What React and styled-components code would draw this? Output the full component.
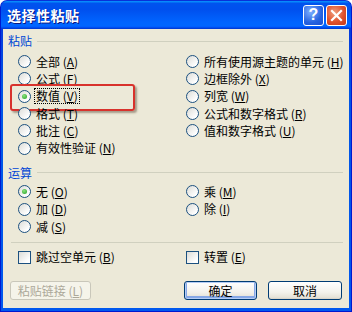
import styled, { createGlobalStyle } from 'styled-components';

const GlobalStyle = createGlobalStyle`
  html, body {
    margin: 0;
    padding: 0;
    background: #ffffff;
  }
  body {
    font-family: "Noto Sans CJK SC", "DejaVu Sans", sans-serif;
    font-size: 12px;
  }
`;

const pasteLeft = [
  { text: '全部', key: 'A' },
  { text: '公式', key: 'F' },
  { text: '数值', key: 'V', checked: true, focus: true, marked: true },
  { text: '格式', key: 'T' },
  { text: '批注', key: 'C' },
  { text: '有效性验证', key: 'N' },
];

const pasteRight = [
  { text: '所有使用源主题的单元', key: 'H' },
  { text: '边框除外', key: 'X' },
  { text: '列宽', key: 'W' },
  { text: '公式和数字格式', key: 'R' },
  { text: '值和数字格式', key: 'U' },
];

const opLeft = [
  { text: '无', key: 'O', checked: true },
  { text: '加', key: 'D' },
  { text: '减', key: 'S' },
];

const opRight = [
  { text: '乘', key: 'M' },
  { text: '除', key: 'I' },
];

function Option({ item, rowHeight }) {
  return (
    <Item $h={rowHeight}>
      {item.marked && <Highlight />}
      <Radio $checked={item.checked} />
      <Label $focus={item.focus}>
        {item.text} (<u>{item.key}</u>)
      </Label>
    </Item>
  );
}

function App() {
  return (
    <>
      <GlobalStyle />
      <Window>
        <TitleBar>
          <Title>选择性粘贴</Title>
          <Controls>
            <HelpButton>?</HelpButton>
            <CloseButton>
              <svg width="13" height="13" viewBox="0 0 13 13">
                <path d="M2 2 L11 11 M11 2 L2 11" stroke="#fff" strokeWidth="2.2" strokeLinecap="square" />
              </svg>
            </CloseButton>
          </Controls>
        </TitleBar>
        <Body>
          <GroupHeader>
            <span>粘贴</span>
          </GroupHeader>
          <Columns $top={5}>
            <Column>
              {pasteLeft.map((it) => (
                <Option key={it.key} item={it} rowHeight={17.3} />
              ))}
            </Column>
            <Column>
              {pasteRight.map((it) => (
                <Option key={it.key} item={it} rowHeight={17.3} />
              ))}
            </Column>
          </Columns>

          <GroupHeader $top={9}>
            <span>运算</span>
          </GroupHeader>
          <Columns $top={3}>
            <Column>
              {opLeft.map((it) => (
                <Option key={it.key} item={it} rowHeight={17.5} />
              ))}
            </Column>
            <Column>
              {opRight.map((it) => (
                <Option key={it.key} item={it} rowHeight={17.5} />
              ))}
            </Column>
          </Columns>

          <Separator />

          <Columns $top={6}>
            <Item $h={16}>
              <Check />
              <Label>
                跳过空单元 (<u>B</u>)
              </Label>
            </Item>
            <Item $h={16}>
              <Check />
              <Label>
                转置 (<u>E</u>)
              </Label>
            </Item>
          </Columns>

          <ButtonRow>
            <Button $w={81} disabled>
              粘贴链接 (<u>L</u>)
            </Button>
            <ButtonGroup>
              <Button $w={73} $default>
                确定
              </Button>
              <Button $w={74}>取消</Button>
            </ButtonGroup>
          </ButtonRow>
        </Body>
      </Window>
    </>
  );
}

export default App;

const Window = styled.div`
  width: 352px;
  height: 312px;
  box-sizing: border-box;
  display: flex;
  flex-direction: column;
  border-radius: 7px 7px 0 0;
  background: linear-gradient(#0831d9, #0055e5 30%, #0058ee);
  border: 1px solid #0019cf;
  border-top-color: #0831d9;
  overflow: hidden;
`;

const TitleBar = styled.div`
  height: 28px;
  flex-shrink: 0;
  display: flex;
  align-items: center;
  justify-content: space-between;
  padding: 0 4px 0 6px;
  background: linear-gradient(
    #0997ff 0%,
    #0053ee 9%,
    #0050ee 30%,
    #0064ff 75%,
    #0066ff 88%,
    #005bff 93%,
    #003dd7 97%,
    #003dd7 100%
  );
`;

const Title = styled.div`
  color: #ffffff;
  font-weight: 700;
  font-size: 14px;
  letter-spacing: 0.5px;
  text-shadow: 1px 1px 0 #0a1883;
`;

const Controls = styled.div`
  display: flex;
  gap: 2px;
`;

const CtrlBase = styled.div`
  width: 21px;
  height: 21px;
  box-sizing: border-box;
  border: 1px solid #ffffff;
  border-radius: 3px;
  display: flex;
  align-items: center;
  justify-content: center;
  color: #ffffff;
`;

const HelpButton = styled(CtrlBase)`
  font-family: "Liberation Sans", Arial, sans-serif;
  font-weight: 700;
  font-size: 16px;
  background: radial-gradient(circle at 35% 30%, #7fb0ff, #2663e0 60%, #1c4fd0);
`;

const CloseButton = styled(CtrlBase)`
  background: radial-gradient(circle at 40% 35%, #f0a080, #e0512c 55%, #c2391b);
`;

const Body = styled.div`
  flex: 1;
  margin: 0 2px 3px 2px;
  background: #ece9d8;
  padding: 5px 6px 0 5px;
  display: flex;
  flex-direction: column;
  color: #000000;
  position: relative;
`;

const GroupHeader = styled.div`
  height: 14px;
  margin-top: ${(p) => p.$top || 0}px;
  display: flex;
  align-items: center;
  gap: 5px;
  color: #0046d5;
  line-height: 14px;
  &::after {
    content: '';
    flex: 1;
    height: 1px;
    background: #d0d0bf;
  }
`;

const Columns = styled.div`
  display: grid;
  grid-template-columns: 168px 1fr;
  padding-left: 10px;
  margin-top: ${(p) => p.$top || 0}px;
`;

const Column = styled.div`
  display: flex;
  flex-direction: column;
`;

const Item = styled.div`
  position: relative;
  height: ${(p) => p.$h}px;
  display: flex;
  align-items: center;
  gap: 3px;
  white-space: nowrap;
  u {
    text-decoration: underline;
  }
`;

const Radio = styled.span`
  width: 13px;
  height: 13px;
  box-sizing: border-box;
  flex-shrink: 0;
  border-radius: 50%;
  border: 1px solid #1c5180;
  background: linear-gradient(135deg, #dcdcd7, #ffffff 80%);
  display: flex;
  align-items: center;
  justify-content: center;
  &::after {
    content: '';
    display: ${(p) => (p.$checked ? 'block' : 'none')};
    width: 5px;
    height: 5px;
    border-radius: 50%;
    background: radial-gradient(circle at 40% 35%, #8be27f, #21a121);
  }
`;

const Check = styled.span`
  width: 13px;
  height: 13px;
  box-sizing: border-box;
  flex-shrink: 0;
  border: 1px solid #1c5180;
  background: linear-gradient(135deg, #dcdcd7, #ffffff 80%);
`;

const Label = styled.span`
  font-size: 12px;
  line-height: 12px;
  padding: 1px 1px;
  border: 1px dotted ${(p) => (p.$focus ? '#000000' : 'transparent')};
`;

const Highlight = styled.span`
  position: absolute;
  left: -8px;
  top: -4px;
  width: 125px;
  height: 27px;
  box-sizing: border-box;
  border: 2px solid #d8322c;
  border-radius: 3px;
  box-shadow: 2px 2px 2px rgba(80, 60, 40, 0.45);
  pointer-events: none;
`;

const Separator = styled.div`
  height: 1px;
  background: #d0d0bf;
  margin: 7px 0 0 3px;
`;

const ButtonRow = styled.div`
  display: flex;
  align-items: center;
  justify-content: space-between;
  margin-top: 16px;
  padding-left: 2px;
  padding-right: 1px;
`;

const ButtonGroup = styled.div`
  display: flex;
  gap: 11px;
`;

const Button = styled.button`
  width: ${(p) => p.$w}px;
  height: 19px;
  padding: 0;
  box-sizing: border-box;
  font-family: "Noto Sans CJK SC", "DejaVu Sans", sans-serif;
  font-size: 12px;
  line-height: 12px;
  color: #000000;
  border: 1px solid #003c74;
  border-radius: 3px;
  background: linear-gradient(#ffffff, #f3f2ec 60%, #e6e3d8 90%, #d6d0c5);
  box-shadow: ${(p) => (p.$default ? 'inset 0 0 0 1px #b5cdf5, inset 0 -1px 0 2px #87a8e6' : 'none')};
  &:disabled {
    color: #aca899;
    border-color: #c9c7ba;
    background: #f5f4ea;
    box-shadow: none;
  }
`;
